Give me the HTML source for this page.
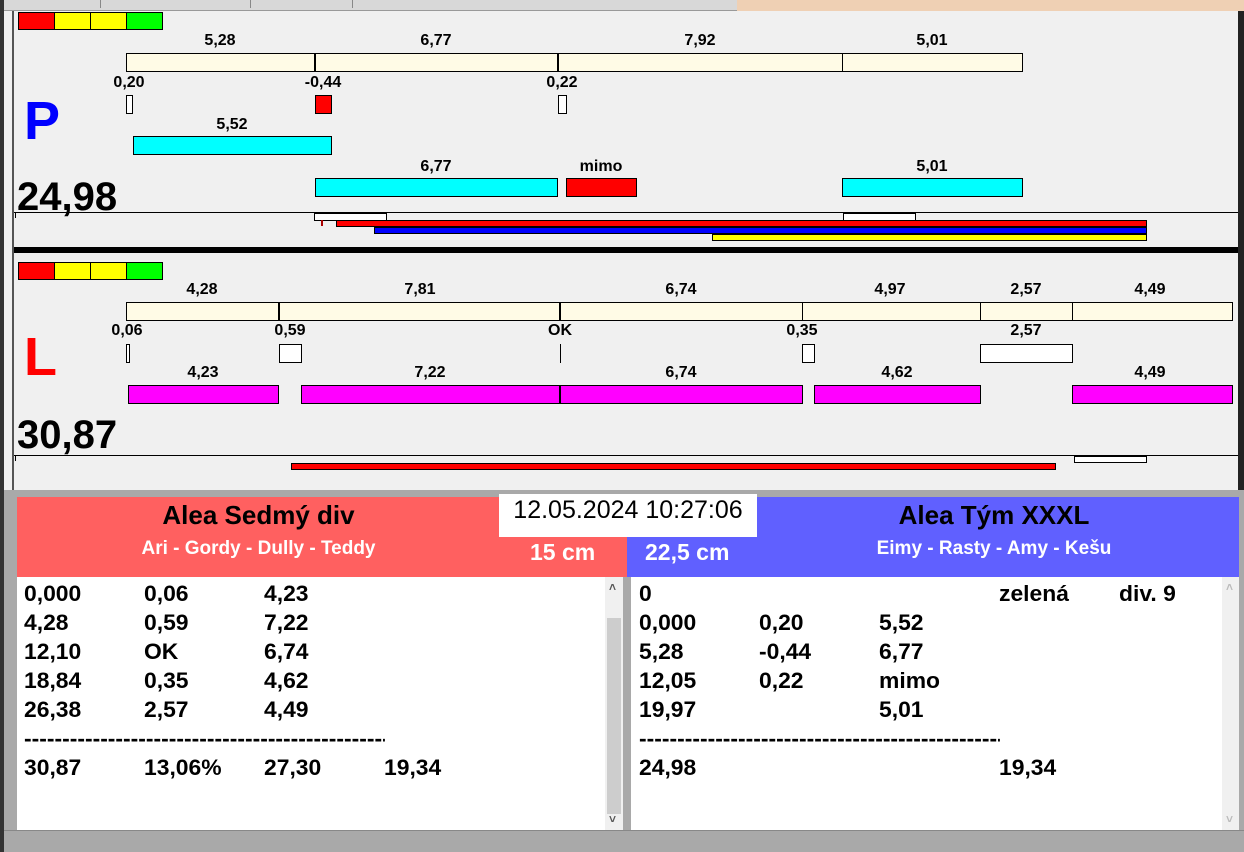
<!DOCTYPE html>
<html><head><meta charset="utf-8"><style>
*{margin:0;padding:0;box-sizing:border-box}
body{width:1244px;height:852px;overflow:hidden;background:#f0f0f0;position:relative;font-family:"Liberation Sans",Arial,sans-serif;font-weight:bold;color:#000}
div{position:absolute}
.be{background:#fffbe6;border:1px solid #000}
.cy{background:#00ffff;border:1px solid #000}
.mg{background:#ff00ff;border:1px solid #000}
.rd{background:#ff0000;border:1px solid #000}
.wh{background:#fff;border:1px solid #000}
.l{font-size:16px;transform:translateX(-50%);white-space:nowrap;line-height:18px}
.r{font-size:22px;line-height:24px;white-space:nowrap;transform:scaleX(1.04);transform-origin:left}
</style></head><body>
<div style="left:0;top:0;width:737px;height:11px;background:#d8d8d8;border-bottom:1px solid #999"></div>
<div style="left:100px;top:0;width:1px;height:8px;background:#888"></div>
<div style="left:250px;top:0;width:1px;height:8px;background:#888"></div>
<div style="left:352px;top:0;width:1px;height:8px;background:#888"></div>
<div style="left:737px;top:0;width:507px;height:11px;background:#efd0b4"></div>
<div style="left:0;top:0;width:4px;height:852px;background:#333"></div>
<div style="left:12px;top:11px;width:2px;height:480px;background:#555"></div>
<div style="left:1238px;top:11px;width:6px;height:480px;background:#222"></div>

<div style="left:18px;top:12px;width:145px;height:18px;display:flex;border:1px solid #000"><span style="flex:1;background:#f00;border-right:1px solid #000"></span><span style="flex:1;background:#ff0;border-right:1px solid #000"></span><span style="flex:1;background:#ff0;border-right:1px solid #000"></span><span style="flex:1;background:#0f0"></span></div>
<div class="l" style="left:220px;top:32px">5,28</div>
<div class="l" style="left:436px;top:32px">6,77</div>
<div class="l" style="left:700px;top:32px">7,92</div>
<div class="l" style="left:932px;top:32px">5,01</div>
<div class="be" style="left:126px;top:53px;width:897px;height:19px"></div>
<div style="left:314px;top:53px;width:2px;height:19px;background:#000"></div>
<div style="left:557px;top:53px;width:2px;height:19px;background:#000"></div>
<div style="left:842px;top:53px;width:1px;height:19px;background:#000"></div>
<div class="l" style="left:129px;top:74px">0,20</div>
<div class="l" style="left:323px;top:74px">-0,44</div>
<div class="l" style="left:562px;top:74px">0,22</div>
<div class="wh" style="left:126px;top:95px;width:7px;height:19px"></div>
<div class="rd" style="left:315px;top:95px;width:17px;height:19px"></div>
<div class="wh" style="left:558px;top:95px;width:9px;height:19px"></div>
<div style="left:24px;top:92px;font-size:54px;color:#0000ff;line-height:58px">P</div>
<div class="l" style="left:232px;top:116px">5,52</div>
<div class="cy" style="left:133px;top:136px;width:199px;height:19px"></div>
<div class="l" style="left:436px;top:158px">6,77</div>
<div class="l" style="left:601px;top:158px">mimo</div>
<div class="l" style="left:932px;top:158px">5,01</div>
<div class="cy" style="left:315px;top:178px;width:243px;height:19px"></div>
<div class="rd" style="left:566px;top:178px;width:71px;height:19px"></div>
<div class="cy" style="left:842px;top:178px;width:181px;height:19px"></div>
<div style="left:17px;top:175px;font-size:40px;line-height:44px">24,98</div>
<div style="left:14px;top:212px;width:1224px;height:1px;background:#000"></div>
<div style="left:15px;top:213px;width:1px;height:5px;background:#000"></div>
<div class="wh" style="left:314px;top:213px;width:73px;height:8px"></div>
<div class="wh" style="left:843px;top:213px;width:73px;height:8px"></div>
<div style="left:321px;top:220px;width:2px;height:6px;background:#a00"></div>
<div class="rd" style="left:336px;top:220px;width:811px;height:7px"></div>
<div style="left:374px;top:227px;width:773px;height:7px;background:#0000ff;border:1px solid #000"></div>
<div style="left:712px;top:234px;width:435px;height:7px;background:#ff0;border:1px solid #000"></div>
<div style="left:14px;top:247px;width:1224px;height:6px;background:#000"></div>

<div style="left:18px;top:262px;width:145px;height:18px;display:flex;border:1px solid #000"><span style="flex:1;background:#f00;border-right:1px solid #000"></span><span style="flex:1;background:#ff0;border-right:1px solid #000"></span><span style="flex:1;background:#ff0;border-right:1px solid #000"></span><span style="flex:1;background:#0f0"></span></div>
<div class="l" style="left:202px;top:281px">4,28</div>
<div class="l" style="left:420px;top:281px">7,81</div>
<div class="l" style="left:681px;top:281px">6,74</div>
<div class="l" style="left:890px;top:281px">4,97</div>
<div class="l" style="left:1026px;top:281px">2,57</div>
<div class="l" style="left:1150px;top:281px">4,49</div>
<div class="be" style="left:126px;top:302px;width:1107px;height:19px"></div>
<div style="left:278px;top:302px;width:2px;height:19px;background:#000"></div>
<div style="left:559px;top:302px;width:2px;height:19px;background:#000"></div>
<div style="left:802px;top:302px;width:1px;height:19px;background:#000"></div>
<div style="left:980px;top:302px;width:1px;height:19px;background:#000"></div>
<div style="left:1072px;top:302px;width:1px;height:19px;background:#000"></div>
<div class="l" style="left:127px;top:322px">0,06</div>
<div class="l" style="left:290px;top:322px">0,59</div>
<div class="l" style="left:560px;top:322px">OK</div>
<div class="l" style="left:802px;top:322px">0,35</div>
<div class="l" style="left:1026px;top:322px">2,57</div>
<div class="wh" style="left:126px;top:344px;width:4px;height:19px"></div>
<div class="wh" style="left:279px;top:344px;width:23px;height:19px"></div>
<div style="left:560px;top:344px;width:1px;height:19px;background:#000"></div>
<div class="wh" style="left:802px;top:344px;width:13px;height:19px"></div>
<div class="wh" style="left:980px;top:344px;width:93px;height:19px"></div>
<div style="left:24px;top:328px;font-size:54px;color:#ff0000;line-height:58px">L</div>
<div class="l" style="left:203px;top:364px">4,23</div>
<div class="l" style="left:430px;top:364px">7,22</div>
<div class="l" style="left:681px;top:364px">6,74</div>
<div class="l" style="left:897px;top:364px">4,62</div>
<div class="l" style="left:1150px;top:364px">4,49</div>
<div class="mg" style="left:128px;top:385px;width:151px;height:19px"></div>
<div class="mg" style="left:301px;top:385px;width:259px;height:19px"></div>
<div class="mg" style="left:560px;top:385px;width:243px;height:19px"></div>
<div class="mg" style="left:814px;top:385px;width:167px;height:19px"></div>
<div class="mg" style="left:1072px;top:385px;width:161px;height:19px"></div>
<div style="left:17px;top:413px;font-size:40px;line-height:44px">30,87</div>
<div style="left:14px;top:455px;width:1224px;height:1px;background:#000"></div>
<div style="left:15px;top:456px;width:1px;height:5px;background:#000"></div>
<div class="wh" style="left:1074px;top:456px;width:73px;height:7px"></div>
<div class="rd" style="left:291px;top:463px;width:765px;height:7px"></div>

<div style="left:4px;top:490px;width:1240px;height:7px;background:#a9a9a9"></div>
<div style="left:4px;top:497px;width:13px;height:340px;background:#a9a9a9"></div>
<div style="left:1239px;top:497px;width:5px;height:340px;background:#a9a9a9"></div>

<div style="left:17px;top:497px;width:610px;height:80px;background:#ff6060"></div>
<div style="left:627px;top:497px;width:612px;height:80px;background:#6060ff"></div>
<div style="left:17px;top:500px;width:483px;text-align:center;font-size:26px;line-height:30px">Alea Sedmý div</div>
<div style="left:17px;top:538px;width:483px;text-align:center;font-size:19px;line-height:22px;color:#fff">Ari - Gordy - Dully - Teddy</div>
<div style="left:530px;top:538px;font-size:23px;line-height:28px;color:#fff">15 cm</div>
<div style="left:645px;top:538px;font-size:23px;line-height:28px;color:#fff">22,5 cm</div>
<div style="left:757px;top:500px;width:474px;text-align:center;font-size:26px;line-height:30px">Alea Tým XXXL</div>
<div style="left:757px;top:538px;width:474px;text-align:center;font-size:19px;line-height:22px;color:#fff">Eimy - Rasty - Amy - Kešu</div>
<div style="left:499px;top:494px;width:258px;height:43px;background:#fff;font-weight:normal;font-size:25px;line-height:33px;text-align:center">12.05.2024 10:27:06</div>

<div style="left:17px;top:577px;width:606px;height:253px;background:#fff"></div>
<div style="left:605px;top:577px;width:18px;height:253px;background:#f0f0f0"></div>
<div style="left:607px;top:618px;width:14px;height:196px;background:#cdcdcd"></div>
<div style="left:609px;top:580px;font-size:12px;color:#555">˄</div>
<div style="left:609px;top:812px;font-size:12px;color:#555">˅</div>
<div style="left:623px;top:577px;width:8px;height:253px;background:#a9a9a9"></div>
<div style="left:631px;top:577px;width:591px;height:253px;background:#fff"></div>
<div style="left:1222px;top:577px;width:17px;height:253px;background:#f0f0f0"></div>
<div style="left:1226px;top:580px;font-size:12px;color:#bbb">˄</div>
<div style="left:1226px;top:812px;font-size:12px;color:#bbb">˅</div>
<div style="left:4px;top:830px;width:1240px;height:22px;background:#a9a9a9;border-top:1px solid #888"></div>

<div class="r" style="left:24px;top:582px">0,000</div><div class="r" style="left:144px;top:582px">0,06</div><div class="r" style="left:264px;top:582px">4,23</div>
<div class="r" style="left:24px;top:611px">4,28</div><div class="r" style="left:144px;top:611px">0,59</div><div class="r" style="left:264px;top:611px">7,22</div>
<div class="r" style="left:24px;top:640px">12,10</div><div class="r" style="left:144px;top:640px">OK</div><div class="r" style="left:264px;top:640px">6,74</div>
<div class="r" style="left:24px;top:669px">18,84</div><div class="r" style="left:144px;top:669px">0,35</div><div class="r" style="left:264px;top:669px">4,62</div>
<div class="r" style="left:24px;top:698px">26,38</div><div class="r" style="left:144px;top:698px">2,57</div><div class="r" style="left:264px;top:698px">4,49</div>
<div class="r" style="left:24px;top:727px;width:347px;overflow:hidden">----------------------------------------------------------</div>
<div class="r" style="left:24px;top:756px">30,87</div><div class="r" style="left:144px;top:756px">13,06%</div><div class="r" style="left:264px;top:756px">27,30</div><div class="r" style="left:384px;top:756px">19,34</div>

<div class="r" style="left:639px;top:582px">0</div><div class="r" style="left:999px;top:582px">zelená</div><div class="r" style="left:1119px;top:582px">div. 9</div>
<div class="r" style="left:639px;top:611px">0,000</div><div class="r" style="left:759px;top:611px">0,20</div><div class="r" style="left:879px;top:611px">5,52</div>
<div class="r" style="left:639px;top:640px">5,28</div><div class="r" style="left:759px;top:640px">-0,44</div><div class="r" style="left:879px;top:640px">6,77</div>
<div class="r" style="left:639px;top:669px">12,05</div><div class="r" style="left:759px;top:669px">0,22</div><div class="r" style="left:879px;top:669px">mimo</div>
<div class="r" style="left:639px;top:698px">19,97</div><div class="r" style="left:879px;top:698px">5,01</div>
<div class="r" style="left:639px;top:727px;width:347px;overflow:hidden">----------------------------------------------------------</div>
<div class="r" style="left:639px;top:756px">24,98</div><div class="r" style="left:999px;top:756px">19,34</div>
</body></html>
